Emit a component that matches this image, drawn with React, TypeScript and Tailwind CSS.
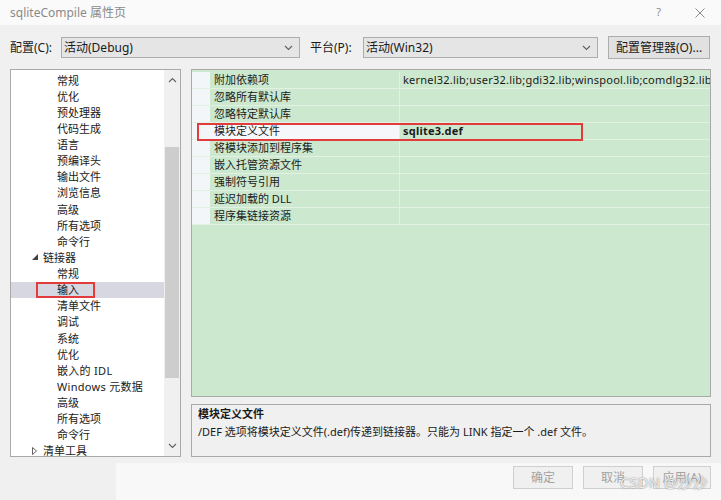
import React from 'react';

const treeItems: { label: string; level: 'child' | 'group'; open?: boolean; selected?: boolean }[] = [
  { label: '常规', level: 'child' },
  { label: '优化', level: 'child' },
  { label: '预处理器', level: 'child' },
  { label: '代码生成', level: 'child' },
  { label: '语言', level: 'child' },
  { label: '预编译头', level: 'child' },
  { label: '输出文件', level: 'child' },
  { label: '浏览信息', level: 'child' },
  { label: '高级', level: 'child' },
  { label: '所有选项', level: 'child' },
  { label: '命令行', level: 'child' },
  { label: '链接器', level: 'group', open: true },
  { label: '常规', level: 'child' },
  { label: '输入', level: 'child', selected: true },
  { label: '清单文件', level: 'child' },
  { label: '调试', level: 'child' },
  { label: '系统', level: 'child' },
  { label: '优化', level: 'child' },
  { label: '嵌入的 IDL', level: 'child' },
  { label: 'Windows 元数据', level: 'child' },
  { label: '高级', level: 'child' },
  { label: '所有选项', level: 'child' },
  { label: '命令行', level: 'child' },
  { label: '清单工具', level: 'group', open: false },
];

const props: { name: string; value?: string; active?: boolean }[] = [
  { name: '附加依赖项', value: 'kernel32.lib;user32.lib;gdi32.lib;winspool.lib;comdlg32.lib' },
  { name: '忽略所有默认库' },
  { name: '忽略特定默认库' },
  { name: '模块定义文件', value: 'sqlite3.def', active: true },
  { name: '将模块添加到程序集' },
  { name: '嵌入托管资源文件' },
  { name: '强制符号引用' },
  { name: '延迟加载的 DLL' },
  { name: '程序集链接资源' },
];

const Chevron = ({ up }: { up?: boolean }) => (
  <svg width="9" height="6" viewBox="0 0 9 6" className="text-[#606060]">
    <path d={up ? 'M1 5 L4.5 1.5 L8 5' : 'M1 1 L4.5 4.5 L8 1'} fill="none" stroke="currentColor" strokeWidth="1.1" />
  </svg>
);

const Combo = ({ text, width }: { text: string; width: string }) => (
  <div className={`${width} h-[21px] bg-[#e5e5e5] border border-[#adadad] flex items-center justify-between pl-[2px] pr-[6px]`}>
    <span className="text-[12px]">{text}</span>
    <Chevron />
  </div>
);

export default function App() {
  return (
    <div className="relative w-[721px] h-[500px] overflow-hidden bg-[#f0f0f0] text-[11px] text-[#1a1a1a] font-['Segoe_UI','Noto_Sans','Noto_Sans_CJK_SC',sans-serif]">
      {/* Title bar */}
      <div className="h-[25px] bg-[#fafafa] flex items-center justify-between pl-[10px] pr-[16px]">
        <span className="text-[12px] text-[#8a8a8a]">sqliteCompile 属性页</span>
        <div className="flex items-center gap-[34px] text-[#8a8a8a]">
          <span className="text-[11px]">?</span>
          <svg width="10" height="10" viewBox="0 0 10 10">
            <path d="M0.5 0.5 L9.5 9.5 M9.5 0.5 L0.5 9.5" stroke="currentColor" strokeWidth="1" />
          </svg>
        </div>
      </div>

      {/* Config row */}
      <div className="h-[44px] flex items-start pt-[11px] px-[10px]">
        <div className="h-[23px] flex items-center w-[51px] shrink-0 text-[12px]">配置(C):</div>
        <div className="pt-[1px] shrink-0"><Combo text="活动(Debug)" width="w-[239px]" /></div>
        <div className="h-[23px] flex items-center w-[53px] shrink-0 ml-[10px] text-[12px]">平台(P):</div>
        <div className="pt-[1px] shrink-0"><Combo text="活动(Win32)" width="w-[235px]" /></div>
        <button className="ml-[10px] w-[102px] shrink-0 h-[23px] bg-[#e1e1e1] border border-[#adadad] text-[12px] flex items-center justify-center">
          配置管理器(O)...
        </button>
      </div>

      {/* Main area */}
      <div className="flex px-[10px] gap-[10px] h-[388px]">
        {/* Tree */}
        <div className="w-[171px] shrink-0 bg-white border border-[#a9a9a9] flex overflow-hidden">
          <div className="flex-1 min-w-0 pt-[2px] overflow-hidden">
            {treeItems.map((it, i) => (
              <div
                key={i}
                className={`relative h-[16.13px] flex items-center ${it.selected ? 'bg-[#d6d7e0]' : ''} ${it.level === 'group' ? 'pl-[21px]' : 'pl-[46px]'}`}
              >
                {it.level === 'group' && (
                  <span className="w-[11px] flex items-center">
                    {it.open ? (
                      <svg width="6" height="6" viewBox="0 0 6 6"><polygon points="6,0 6,6 0,6" fill="#404040" /></svg>
                    ) : (
                      <svg width="5" height="8" viewBox="0 0 5 8"><polygon points="0.5,0.5 4.5,4 0.5,7.5" fill="none" stroke="#606060" strokeWidth="1" /></svg>
                    )}
                  </span>
                )}
                <span className={`whitespace-nowrap leading-none ${/[A-Za-z]/.test(it.label) ? 'tracking-[0.3px]' : ''}`}>{it.label}</span>
                {it.selected && (
                  <div className="absolute left-[25px] top-[0px] w-[59px] h-[16px] border-2 border-[#e23b3b]" />
                )}
              </div>
            ))}
          </div>
          {/* Scrollbar */}
          <div className="w-[16px] shrink-0 bg-[#f0f0f0] flex flex-col items-center">
            <div className="h-[16px] flex items-center justify-center mt-[2px]"><Chevron up /></div>
            <div className="mt-[59px] w-[14px] h-[231px] bg-[#cdcdcd]" />
            <div className="flex-1" />
            <div className="h-[16px] flex items-center justify-center mb-[2px]"><Chevron /></div>
          </div>
        </div>

        {/* Right column */}
        <div className="flex-1 min-w-0 flex flex-col gap-[7px]">
          <div className="h-[328px] bg-[#cce8cf] border border-[#a9a9a9] pt-[2px] overflow-hidden">
            <div className="relative">
              {props.map((p, i) => (
                <div key={i} className="flex h-[17px] border-b border-[#e3f1e4]">
                  <div className="w-[18px] shrink-0 bg-[#f3f6f8]" />
                  <div className={`w-[189px] shrink-0 pl-[4px] flex items-center whitespace-nowrap ${p.active ? 'bg-[#f6f7fa]' : ''}`}>{p.name}</div>
                  <div className="w-px shrink-0 bg-[#e3f1e4]" />
                  <div className={`flex-1 min-w-0 pl-[3px] flex items-center whitespace-nowrap overflow-hidden tracking-[0.22px] ${p.active ? 'font-bold' : ''}`}>{p.value}</div>
                </div>
              ))}
              <div className="absolute left-[5px] top-[51px] w-[386px] h-[18px] border-2 border-[#e23b3b]" />
            </div>
          </div>
          <div className="flex-1 border border-[#a9a9a9] bg-[#f0f0f0] px-[6px]">
            <div className="font-bold leading-[18px]">模块定义文件</div>
            <div className="leading-[18px]">/DEF 选项将模块定义文件(.def)传递到链接器。只能为 LINK 指定一个 .def 文件。</div>
          </div>
        </div>
      </div>

      {/* Bottom bar */}
      <div className="flex mt-[6px] h-[37px]">
        <div className="w-[116px] shrink-0" />
        <div className="flex-1 bg-[#f8f8f8] flex justify-end items-start pt-[3px] pr-[10px] gap-[10px]">
          <button className="w-[60px] h-[23px] border border-[#cfcfcf] bg-[#f0f0f0] text-[12px] text-[#a2a2a2]">确定</button>
          <button className="w-[60px] h-[23px] border border-[#cfcfcf] bg-[#f0f0f0] text-[12px] text-[#a2a2a2]">取消</button>
          <button className="w-[58px] h-[23px] border border-[#cfcfcf] bg-[#f0f0f0] text-[12px] text-[#a2a2a2]">应用(A)</button>
        </div>
      </div>

      {/* Watermark */}
      <div className="absolute left-[620px] top-[471px] text-[15px] text-white/85 [text-shadow:0_0_1px_rgba(110,110,110,0.9),0_0_2px_rgba(150,150,150,0.5)] whitespace-nowrap">
        CSDN @沙沙
      </div>
    </div>
  );
}
